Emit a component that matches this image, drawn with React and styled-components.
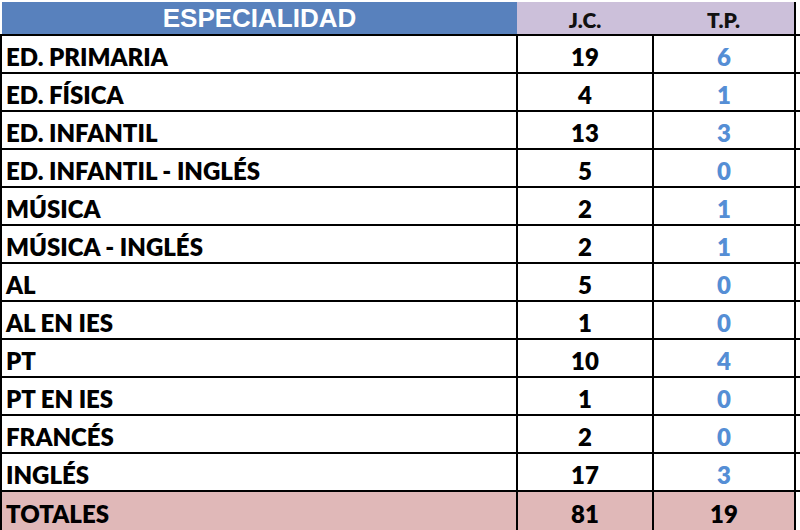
import React from 'react'
import styled, {createGlobalStyle} from 'styled-components'

const rows = [
  ['ED. PRIMARIA', 19, 6],
  ['ED. FÍSICA', 4, 1],
  ['ED. INFANTIL', 13, 3],
  ['ED. INFANTIL - INGLÉS', 5, 0],
  ['MÚSICA', 2, 1],
  ['MÚSICA - INGLÉS', 2, 1],
  ['AL', 5, 0],
  ['AL EN IES', 1, 0],
  ['PT', 10, 4],
  ['PT EN IES', 1, 0],
  ['FRANCÉS', 2, 0],
  ['INGLÉS', 17, 3],
]

const GlobalStyle = createGlobalStyle`
  body {
    margin: 0;
    background: #fff;
    font-family: Lato, "Open Sans", sans-serif;
  }
`;

const Sheet = styled.div`
  width: 800px;
  height: 530px;
  overflow: hidden;
  display: flex;
  flex-direction: column;
`;

const HeadRow = styled.div`
  display: flex;
  height: 36px;
  box-sizing: border-box;
  padding: 2px 0 0 2px;
  border-bottom: 2px solid #000;
`;

const Row = styled.div`
  display: flex;
  height: 38px;
  box-sizing: border-box;
  border-bottom: ${p => (p.last ? 'none' : '2px solid #000')};
  background: ${p => (p.total ? 'linear-gradient(to right, #e0b8b8 796px, #fff 796px)' : '#fff')};
`;

const HeadCell = styled.div`
  box-sizing: border-box;
  width: ${p => p.w}px;
  background: ${p => p.bg};
  color: ${p => p.fg};
  display: flex;
  align-items: center;
  justify-content: center;
  font-family: ${p => (p.arial ? '"Liberation Sans", Arial, sans-serif' : 'Lato, sans-serif')};
  font-weight: ${p => (p.arial ? 700 : 800)};
  font-size: ${p => p.size}px;
  border-right: ${p => (p.edge ? '2px solid #000' : 'none')};
  padding-top: ${p => (p.arial ? 0 : 3)}px;
`;

const Cell = styled.div`
  box-sizing: border-box;
  width: ${p => p.w}px;
  border-left: 2px solid #000;
  border-right: ${p => (p.edge ? '2px solid #000' : 'none')};
  display: flex;
  align-items: center;
  justify-content: ${p => (p.left ? 'flex-start' : 'center')};
  padding: 4px 0 0 ${p => (p.left ? 4 : 0)}px;
  font-weight: 800;
  font-size: 24px;
  color: ${p => p.color || '#000'};
  white-space: nowrap;
`;

const Filler = styled.div`
  flex: 1;
  background: #fff;
`;

export default function App() {
  return (
    <Sheet>
      <GlobalStyle />
      <HeadRow>
        <HeadCell w={515} bg="#5881bd" fg="#fff" size={26} arial>ESPECIALIDAD</HeadCell>
        <HeadCell w={136} bg="#ccc0da" fg="#111" size={21}>J.C.</HeadCell>
        <HeadCell w={143} bg="#ccc0da" fg="#111" size={21} edge>T.P.</HeadCell>
        <Filler />
      </HeadRow>
      {rows.map(([name, jc, tp]) => (
        <Row key={name}>
          <Cell w={516} left>{name}</Cell>
          <Cell w={136}>{jc}</Cell>
          <Cell w={144} edge color="#558ed5">{tp}</Cell>
          <Filler />
        </Row>
      ))}
      <Row total last>
        <Cell w={516} left>TOTALES</Cell>
        <Cell w={136}>81</Cell>
        <Cell w={144} edge>19</Cell>
      </Row>
    </Sheet>
  )
}
